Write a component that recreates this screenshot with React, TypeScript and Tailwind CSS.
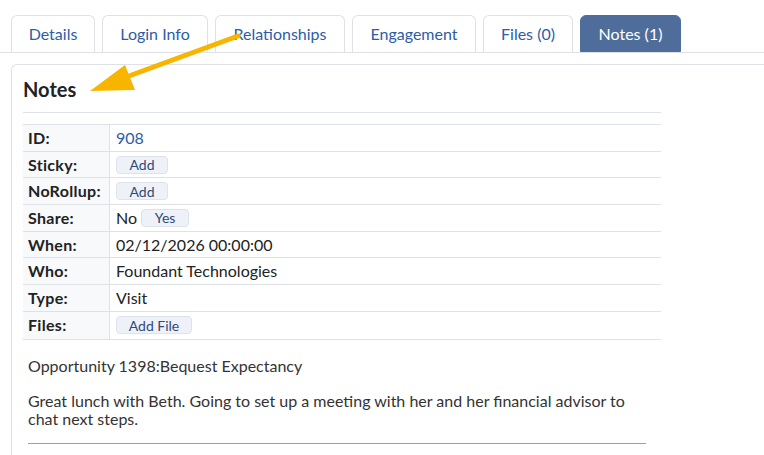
import React from 'react';

const tabs = [
  { label: 'Details', w: 'w-[84px]' },
  { label: 'Login Info', w: 'w-[106px]' },
  { label: 'Relationships', w: 'w-[130px]' },
  { label: 'Engagement', w: 'w-[124px]' },
  { label: 'Files (0)', w: 'w-[90px]' },
  { label: 'Notes (1)', w: 'w-[101px]', active: true },
];

function SmallButton({ children, w }: { children: React.ReactNode; w: string }) {
  return (
    <span
      className={`${w} h-[18px] inline-flex items-center justify-center rounded-[4px] border border-[#dde3ec] bg-[#eef2f8] text-[14px] text-[#2f4a78]`}
    >
      {children}
    </span>
  );
}

function Row({ label, children, last }: { label: string; children: React.ReactNode; last?: boolean }) {
  return (
    <div className={`flex h-[26.7px] ${last ? '' : 'border-b'} border-[#dee2e6]`}>
      <div className="w-[87px] shrink-0 bg-[#f8f9fa] border-r border-[#dee2e6] pl-[5px] flex items-center font-bold text-[16px] tracking-[0.3px] text-[#222]">
        {label}
      </div>
      <div className="flex-1 pl-[6px] flex items-center gap-[4px] text-[16px] text-[#222]">{children}</div>
    </div>
  );
}

export default function App() {
  return (
    <div
      className="relative w-[764px] h-[455px] overflow-hidden bg-white"
      style={{ fontFamily: '"Lato", "Liberation Sans", sans-serif' }}
    >
      <div className="pt-[15px] border-b border-[#dee2e6]">
        <div className="flex gap-[7px] pl-[11px]">
          {tabs.map((t) => (
            <div
              key={t.label}
              className={`${t.w} h-[37px] flex items-center justify-center rounded-t-[6px] text-[16px] ${
                t.active
                  ? 'bg-[#4f6d9b] text-white border border-[#4f6d9b]'
                  : 'border border-b-0 border-[#dee2e6] text-[#2d5ca8]'
              }`}
            >
              {t.label}
            </div>
          ))}
        </div>
      </div>

      <div className="ml-[11px] mt-[11px] border-l border-t border-[#dee2e6] rounded-tl-[6px] pl-[11px] pt-[12px] h-[400px]">
        <h2 className="font-bold text-[20px] leading-[24px] text-[#222]">Notes</h2>
        <div className="w-[638px] mt-[11px] border-t border-[#dee2e6]" />
        <div className="w-[638px] mt-[11px] border-t border-b border-[#dee2e6]">
          <Row label="ID:">
            <span className="text-[#2d5ca8]">908</span>
          </Row>
          <Row label="Sticky:">
            <SmallButton w="w-[52px]">Add</SmallButton>
          </Row>
          <Row label="NoRollup:">
            <SmallButton w="w-[52px]">Add</SmallButton>
          </Row>
          <Row label="Share:">
            <span>No</span>
            <SmallButton w="w-[48px]">Yes</SmallButton>
          </Row>
          <Row label="When:">02/12/2026 00:00:00</Row>
          <Row label="Who:">Foundant Technologies</Row>
          <Row label="Type:">Visit</Row>
          <Row label="Files:" last>
            <SmallButton w="w-[76px]">Add File</SmallButton>
          </Row>
        </div>
        <div className="pl-[5px] mt-[17px] w-[623px] text-[16px] leading-[18px] text-[#333]">
          <p>Opportunity 1398:Bequest Expectancy</p>
          <p className="mt-[17px]">
            Great lunch with Beth. Going to set up a meeting with her and her financial advisor to
            <br />
            chat next steps.
          </p>
          <div className="mt-[15px] border-t border-[#a0a0a0]" />
        </div>
      </div>

      <svg className="absolute left-0 top-0 pointer-events-none" width="764" height="455" viewBox="0 0 764 455">
        <line x1="238" y1="36" x2="118" y2="80" stroke="#f7b500" strokeWidth="5" strokeLinecap="round" />
        <polygon points="90,91 125,65 135,90" fill="#f7b500" />
      </svg>
    </div>
  );
}
